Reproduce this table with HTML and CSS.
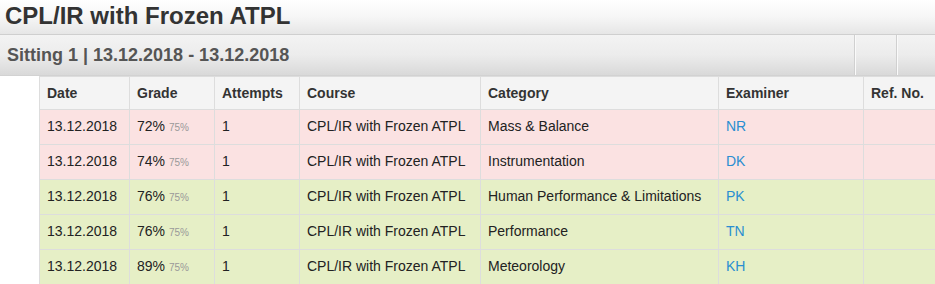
FILE: index.html
```html
<!DOCTYPE html>
<html>
<head>
<meta charset="utf-8">
<link rel="stylesheet" href="styles.css">
</head>
<body>
<div class="page">
  <h1 class="title">CPL/IR with Frozen ATPL</h1>
  <div class="sitting">
    <h2 class="sitting-title">Sitting 1 | 13.12.2018 - 13.12.2018</h2>
    <div class="sitting-tools">
      <span class="tool"></span>
      <span class="tool"></span>
    </div>
  </div>
  <div class="results">
    <table class="grid">
      <colgroup>
        <col class="c-date"><col class="c-grade"><col class="c-att"><col class="c-course"><col class="c-cat"><col class="c-exam"><col class="c-ref">
      </colgroup>
      <thead>
        <tr><th>Date</th><th>Grade</th><th>Attempts</th><th>Course</th><th>Category</th><th>Examiner</th><th>Ref. No.</th></tr>
      </thead>
      <tbody>
        <tr class="fail"><td>13.12.2018</td><td>72% <small class="pass">75%</small></td><td>1</td><td>CPL/IR with Frozen ATPL</td><td>Mass &amp; Balance</td><td><a class="ex" href="#">NR</a></td><td></td></tr>
        <tr class="fail"><td>13.12.2018</td><td>74% <small class="pass">75%</small></td><td>1</td><td>CPL/IR with Frozen ATPL</td><td>Instrumentation</td><td><a class="ex" href="#">DK</a></td><td></td></tr>
        <tr class="ok"><td>13.12.2018</td><td>76% <small class="pass">75%</small></td><td>1</td><td>CPL/IR with Frozen ATPL</td><td>Human Performance &amp; Limitations</td><td><a class="ex" href="#">PK</a></td><td></td></tr>
        <tr class="ok"><td>13.12.2018</td><td>76% <small class="pass">75%</small></td><td>1</td><td>CPL/IR with Frozen ATPL</td><td>Performance</td><td><a class="ex" href="#">TN</a></td><td></td></tr>
        <tr class="ok"><td>13.12.2018</td><td>89% <small class="pass">75%</small></td><td>1</td><td>CPL/IR with Frozen ATPL</td><td>Meteorology</td><td><a class="ex" href="#">KH</a></td><td></td></tr>
      </tbody>
    </table>
  </div>
</div>
</body>
</html>
```

FILE: styles.css
```css
html, body {
  margin: 0;
  padding: 0;
  background: #fff;
}
body {
  font-family: "Liberation Sans", Arial, sans-serif;
  font-size: 14px;
  color: #333;
  overflow: hidden;
}
.page {
  width: 935px;
  overflow: hidden;
}
.title {
  margin: 0;
  height: 35px;
  box-sizing: border-box;
  padding: 3px 0 0 5px;
  font-size: 24px;
  line-height: 26px;
  font-weight: bold;
  color: #333;
  background: linear-gradient(to bottom, #ffffff 0%, #f6f6f6 50%, #e6e6e6 100%);
  border-bottom: 1px solid #cfcfcf;
}
.sitting {
  display: flex;
  align-items: stretch;
  height: 41px;
  box-sizing: border-box;
  border-bottom: 1px solid #d2d2d2;
  background: linear-gradient(to bottom, #f3f3f3 0%, #ececec 50%, #d9d9d9 100%);
}
.sitting-title {
  flex: 1;
  margin: 0;
  padding: 10px 0 0 7px;
  font-size: 18px;
  line-height: 20px;
  font-weight: bold;
  color: #555;
}
.sitting-tools {
  display: flex;
}
.tool {
  width: 41px;
  border-left: 1px solid #d0d0d0;
  box-shadow: inset 1px 0 0 #fafafa;
}
.tool + .tool {
  width: 38px;
}
.results {
  padding-left: 39px;
}
.grid {
  width: 940px;
  table-layout: fixed;
  border-collapse: collapse;
}
.c-date { width: 90px; }
.c-grade { width: 85px; }
.c-att { width: 85px; }
.c-course { width: 181px; }
.c-cat { width: 238px; }
.c-exam { width: 145px; }
.grid th,
.grid td {
  border: 1px solid #dddddd;
  padding: 6px 7px 8px;
  height: 20px;
  line-height: 20px;
  text-align: left;
  white-space: nowrap;
  overflow: hidden;
}
.grid th {
  background: #f4f4f4;
  font-weight: bold;
  color: #333;
  padding: 6px 7px 6px;
}
.grid td {
  color: #222;
}
.fail td {
  background: #fbe2e2;
}
.ok td {
  background: #e6efc6;
}
.pass {
  font-size: 10px;
  line-height: 0;
  color: #999;
}
.ex {
  color: #2a8ed1;
  text-decoration: none;
}
```
